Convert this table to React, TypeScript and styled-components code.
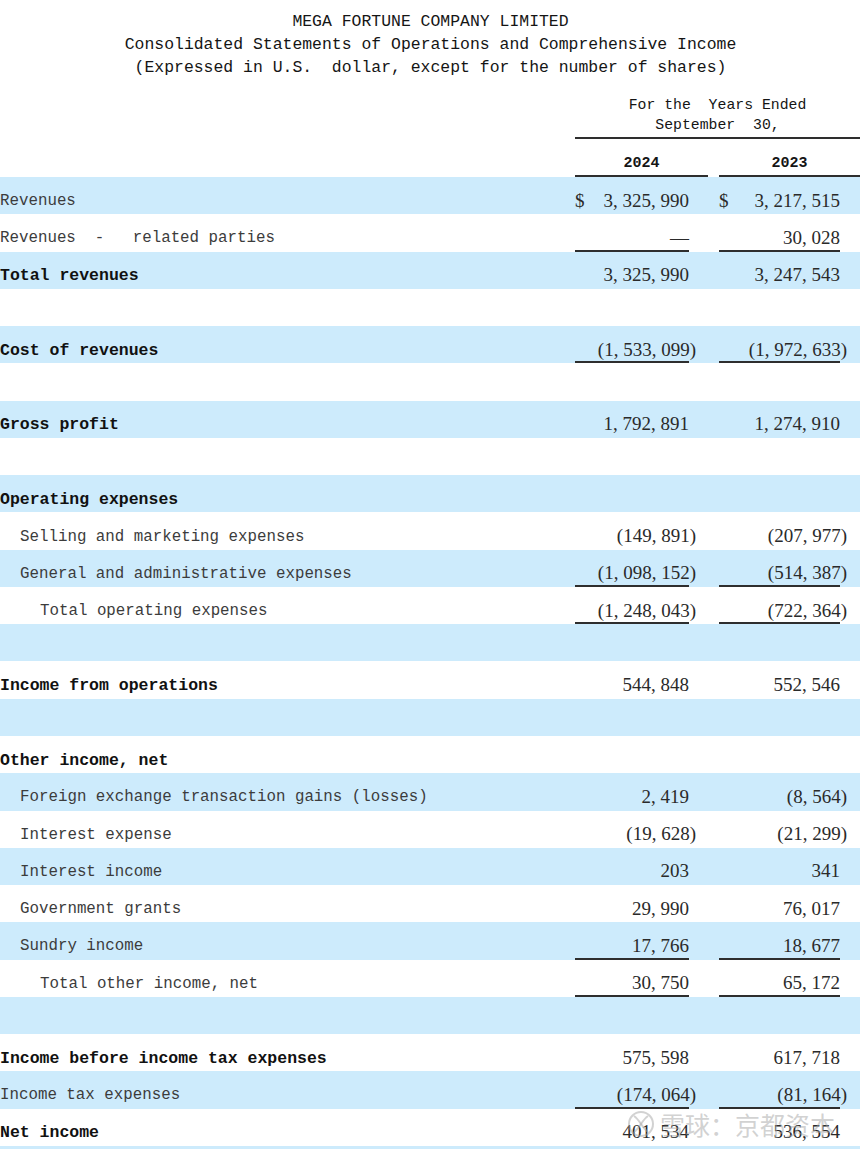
import React from "react";
import styled, { createGlobalStyle } from "styled-components";

const GlobalStyle = createGlobalStyle`
  html, body {
    margin: 0;
    padding: 0;
    background: #ffffff;
  }
  body {
    width: 861px;
    overflow: hidden;
  }
`;

const BLUE = "#cdebfc";
const RULE = "#2e2e2e";
const MONO = `"Liberation Mono", "DejaVu Sans Mono", monospace`;
const SERIF = `"Liberation Serif", "DejaVu Serif", serif`;

const Page = styled.div`
  position: relative;
  width: 861px;
  height: 1149px;
  overflow: hidden;
  background: #ffffff;
`;

const TitleBlock = styled.header`
  padding-top: 11px;
  text-align: center;
  font-family: ${MONO};
  font-size: 16.45px;
  line-height: 22.8px;
  color: #151515;
  white-space: pre;
`;

const TitleLine = styled.div``;

const Grid = styled.div`
  display: grid;
  grid-template-columns: 564px 133px 141px;
  column-gap: 11px;
  width: 860px;
`;

const PeriodHead = styled(Grid)`
  margin-top: 15.6px;
`;

const PeriodCaption = styled.div`
  grid-column: 2 / 4;
  text-align: center;
  font-family: ${MONO};
  font-size: 14.8px;
  line-height: 20px;
  color: #151515;
  white-space: pre;
  padding-bottom: 2px;
  border-bottom: 2px solid ${RULE};
`;

const YearHead = styled(Grid)`
  height: 38px;
`;

const Year = styled.div`
  display: flex;
  align-items: center;
  justify-content: center;
  padding-top: 14px;
  font-family: ${MONO};
  font-weight: bold;
  font-size: 15px;
  color: #151515;
  border-bottom: 2px solid ${RULE};
`;

const Row = styled(Grid)<{ $shade?: boolean }>`
  height: 37.27px;
  background: ${(p) => (p.$shade ? BLUE : "transparent")};
`;

const Label = styled.div<{ $indent: number; $bold?: boolean }>`
  display: flex;
  align-items: center;
  padding-left: ${(p) => p.$indent * 20}px;
  padding-top: 11px;
  font-family: ${MONO};
  font-size: ${(p) => (p.$bold ? "16.5px" : "15.8px")};
  font-weight: ${(p) => (p.$bold ? "bold" : "normal")};
  color: ${(p) => (p.$bold ? "#111111" : "#3c3c3c")};
  white-space: pre;
`;

const ValueCell = styled.div<{ $pad: number }>`
  display: flex;
  padding-right: ${(p) => p.$pad}px;
`;

const Amount = styled.div<{ $rule?: boolean }>`
  flex: 1;
  display: flex;
  align-items: center;
  justify-content: space-between;
  padding-top: 12px;
  box-sizing: border-box;
  border-bottom: 2px solid ${(p) => (p.$rule ? RULE : "transparent")};
  font-family: ${SERIF};
  font-size: 19px;
  color: #2a2a2a;
  white-space: pre;
`;

const Dollar = styled.span``;

const Figure = styled.span`
  margin-left: auto;
`;

const Hang = styled.span`
  margin-right: -7px;
`;

const Watermark = styled.div`
  position: absolute;
  left: 627px;
  top: 1108px;
  display: flex;
  align-items: center;
  gap: 5px;
  font-family: "Noto Sans CJK SC", sans-serif;
  font-size: 25px;
  line-height: 32px;
  color: rgba(165, 165, 165, 0.5);
  pointer-events: none;
`;

type Line = {
  label?: string;
  indent?: number;
  bold?: boolean;
  shade?: boolean;
  a?: string;
  b?: string;
  dollar?: boolean;
  rule?: boolean;
};

const lines: Line[] = [
  { label: "Revenues", shade: true, a: "3, 325, 990", b: "3, 217, 515", dollar: true },
  { label: "Revenues  -   related parties", a: "—", b: "30, 028", rule: true },
  { label: "Total revenues", bold: true, shade: true, a: "3, 325, 990", b: "3, 247, 543" },
  {},
  { label: "Cost of revenues", bold: true, shade: true, a: "(1, 533, 099)", b: "(1, 972, 633)", rule: true },
  {},
  { label: "Gross profit", bold: true, shade: true, a: "1, 792, 891", b: "1, 274, 910" },
  {},
  { label: "Operating expenses", bold: true, shade: true },
  { label: "Selling and marketing expenses", indent: 1, a: "(149, 891)", b: "(207, 977)" },
  { label: "General and administrative expenses", indent: 1, shade: true, a: "(1, 098, 152)", b: "(514, 387)", rule: true },
  { label: "Total operating expenses", indent: 2, a: "(1, 248, 043)", b: "(722, 364)", rule: true },
  { shade: true },
  { label: "Income from operations", bold: true, a: "544, 848", b: "552, 546" },
  { shade: true },
  { label: "Other income, net", bold: true },
  { label: "Foreign exchange transaction gains (losses)", indent: 1, shade: true, a: "2, 419", b: "(8, 564)" },
  { label: "Interest expense", indent: 1, a: "(19, 628)", b: "(21, 299)" },
  { label: "Interest income", indent: 1, shade: true, a: "203", b: "341" },
  { label: "Government grants", indent: 1, a: "29, 990", b: "76, 017" },
  { label: "Sundry income", indent: 1, shade: true, a: "17, 766", b: "18, 677", rule: true },
  { label: "Total other income, net", indent: 2, a: "30, 750", b: "65, 172", rule: true },
  { shade: true },
  { label: "Income before income tax expenses", bold: true, a: "575, 598", b: "617, 718" },
  { label: "Income tax expenses", shade: true, a: "(174, 064)", b: "(81, 164)", rule: true },
  { label: "Net income", bold: true, a: "401, 534", b: "536, 554" },
  { shade: true },
];

function Value({ text, dollar, rule }: { text?: string; dollar?: boolean; rule?: boolean }) {
  const neg = !!text && text.endsWith(")");
  const body = neg ? text!.slice(0, -1) : text;
  return (
    <Amount $rule={rule}>
      {dollar ? <Dollar>$</Dollar> : null}
      {text ? (
        <Figure>
          {body}
          {neg ? <Hang>)</Hang> : null}
        </Figure>
      ) : null}
    </Amount>
  );
}

function SnowballLogo() {
  return (
    <svg width="28" height="28" viewBox="0 0 28 28" fill="none" stroke="currentColor" strokeWidth="2">
      <circle cx="14" cy="14" r="12" />
      <path d="M7 6 C13 10, 15 18, 21 22" />
      <path d="M21 6 C15 10, 13 18, 7 22" />
    </svg>
  );
}

export default function App() {
  return (
    <>
      <GlobalStyle />
      <Page>
        <TitleBlock>
          <TitleLine>MEGA FORTUNE COMPANY LIMITED</TitleLine>
          <TitleLine>Consolidated Statements of Operations and Comprehensive Income</TitleLine>
          <TitleLine>(Expressed in U.S.  dollar, except for the number of shares)</TitleLine>
        </TitleBlock>

        <PeriodHead>
          <PeriodCaption>
            {"For the  Years Ended\nSeptember  30,"}
          </PeriodCaption>
        </PeriodHead>

        <YearHead>
          <div />
          <Year>2024</Year>
          <Year>2023</Year>
        </YearHead>

        {lines.map((l, i) => (
          <Row key={i} $shade={l.shade}>
            <Label $indent={l.indent ?? 0} $bold={l.bold}>
              {l.label ?? ""}
            </Label>
            <ValueCell $pad={19}>
              <Value text={l.a} dollar={l.dollar} rule={l.rule} />
            </ValueCell>
            <ValueCell $pad={20}>
              <Value text={l.b} dollar={l.dollar} rule={l.rule} />
            </ValueCell>
          </Row>
        ))}

        <Watermark>
          <SnowballLogo />
          <span>雪球：京都资本</span>
        </Watermark>
      </Page>
    </>
  );
}
